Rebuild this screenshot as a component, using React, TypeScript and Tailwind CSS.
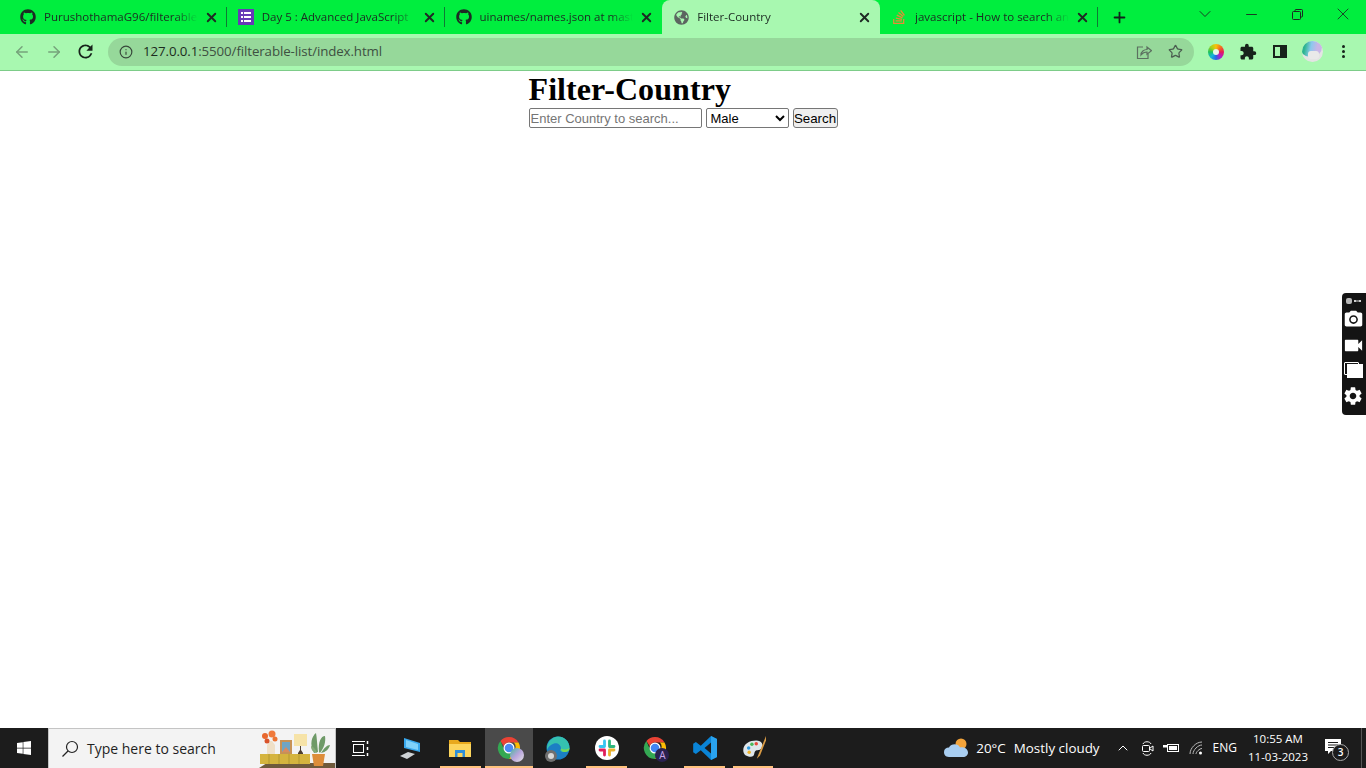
import { ArrowLeft, ArrowRight, ChevronDown, ChevronUp, Info, Minus, Plus, Star, X } from "lucide-react";
import { FaGithub, FaGlobeAmericas, FaStackOverflow, FaWindows } from "react-icons/fa";
import { MdExtension, MdPhotoCamera, MdRefresh, MdSettings, MdVideocam } from "react-icons/md";

const uiFont = "font-['Open_Sans','Noto_Sans',sans-serif]";

const tabs = [
  { id: "repo", title: "PurushothamaG96/filterable-list", icon: "github" },
  { id: "day", title: "Day 5 : Advanced JavaScript", icon: "form" },
  { id: "names", title: "uinames/names.json at master", icon: "github" },
  { id: "filter", title: "Filter-Country", icon: "globe", active: true },
  { id: "so", title: "javascript - How to search and filter", icon: "so" },
];

function TabIcon({ icon }: { icon: string }) {
  if (icon === "github") return <FaGithub size={16} className="shrink-0 text-[#1d2b24]" />;
  if (icon === "globe") return <FaGlobeAmericas size={15} className="shrink-0 text-[#5c6560]" />;
  if (icon === "so") return <FaStackOverflow size={16} className="shrink-0 text-[#e98a36]" />;
  return (
    <div className="flex h-4 w-4 shrink-0 flex-col justify-center gap-[2px] bg-[#673ab7] px-[3px]">
      {[0, 1, 2].map((row) => (
        <div key={row} className="flex h-[2px] gap-px">
          <div className="w-[2px] bg-white" />
          <div className="flex-1 bg-white" />
        </div>
      ))}
    </div>
  );
}

function TabStrip() {
  return (
    <div className={`flex h-[34px] shrink-0 items-stretch bg-[#00ee3e] pl-[9px] ${uiFont}`}>
      {tabs.map((tab, i) => {
        const noDivider = tab.active || tabs[i + 1]?.active;
        return (
          <div
            key={tab.id}
            className={`relative flex w-[217.75px] items-center pl-[11px] pr-[8px] ${tab.active ? "rounded-t-[8px] bg-[#a8f8b0]" : ""}`}
          >
            <div className="flex w-4 justify-center">
              <TabIcon icon={tab.icon} />
            </div>
            <span className="ml-2 flex-1 overflow-hidden whitespace-nowrap text-[11.5px] text-[#1c2a22] [mask-image:linear-gradient(to_right,black_85%,transparent)]">
              {tab.title}
            </span>
            <X size={15} strokeWidth={3} className="ml-[6px] shrink-0 text-[#1f2a24]" />
            {!noDivider && <div className="absolute right-0 top-[7px] h-[20px] w-px bg-[#0f7a35]" />}
          </div>
        );
      })}
      <div className="ml-[10px] flex w-[24px] items-center justify-center">
        <Plus size={17} strokeWidth={2.5} className="text-[#10231a]" />
      </div>
      <div className="ml-auto flex items-center text-[#1b2a20]">
        <div className="flex w-[46px] justify-center pb-[6px]">
          <ChevronDown size={20} strokeWidth={1.1} />
        </div>
        <div className="flex w-[46px] justify-center pb-[6px]">
          <Minus size={17} strokeWidth={1.3} />
        </div>
        <div className="flex w-[46px] justify-center pb-[6px]">
          <svg width="11" height="11" viewBox="0 0 11 11" fill="none" stroke="currentColor">
            <rect x="0.5" y="2.5" width="8" height="8" rx="1" />
            <path d="M3 2.5V1.5a1 1 0 0 1 1-1h5.500a1 1 0 0 1 1 1V7a1 1 0 0 1-1 1h-1" />
          </svg>
        </div>
        <div className="flex w-[46px] justify-center pb-[6px]">
          <X size={20} strokeWidth={1} />
        </div>
      </div>
    </div>
  );
}

function ColorWheel() {
  return (
    <div className="flex h-4 w-4 items-center justify-center rounded-full bg-[conic-gradient(#f9c20a,#f2701d,#e8185a,#b31fc4,#2866e8,#12b6d8,#1fc45a,#a6d31a,#f9c20a)]">
      <div className="h-[6px] w-[6px] rounded-full bg-[#e8f8e8]" />
    </div>
  );
}

function Toolbar() {
  return (
    <div className={`flex h-[37px] shrink-0 items-center border-b border-[#7dcc89] bg-[#a8f8b0] pb-px ${uiFont}`}>
      <div className="flex w-[108px] items-center pl-[13px]">
        <ArrowLeft size={18} strokeWidth={2} className="text-[#76a37b]" />
        <ArrowRight size={18} strokeWidth={2} className="ml-[14px] text-[#76a37b]" />
        <MdRefresh size={21} className="ml-[12px] text-[#17231b]" />
      </div>
      <div className="flex h-[28px] w-[1086px] items-center rounded-full bg-[#96d89a] pl-[11px] pr-[11px]">
        <Info size={14} strokeWidth={2} className="text-[#37473a]" />
        <span className="ml-[10px] pt-px text-[13.3px] tracking-[-0.1px] text-[#1c2b20]">
          127.0.0.1<span className="text-[#3e5042]">:5500/filterable-list/index.html</span>
        </span>
        <svg width="16" height="16" viewBox="0 0 16 16" fill="none" stroke="#5c7060" strokeWidth="1.2" className="ml-auto mr-4">
          <path d="M7 3H1.500V14.500H12V10" />
          <path d="M5 11C5 7.500 8 5.500 11 5.500V3L15.500 6.700 11 10.200V8C8.500 8 6.500 9 5 11Z" />
        </svg>
        <Star size={15} strokeWidth={2} className="text-[#4b5d50]" />
      </div>
      <div className="ml-[14px] flex items-center">
        <ColorWheel />
        <MdExtension size={18} className="ml-[15px] text-[#17231b]" />
        <div className="ml-[16px] flex h-[13px] w-[14px] justify-end border-2 border-[#17231b]">
          <div className="w-[5px] bg-[#17231b]" />
        </div>
        <div className="relative ml-[15px] h-[21px] w-[21px] overflow-hidden rounded-full bg-[#e4e4e4]">
          <div className="absolute -left-[2px] -top-[4px] h-[20px] w-[22px] rounded-full bg-[linear-gradient(100deg,#2bb58e_25%,#8cc8ee_50%,#c8b6e6_75%)]" />
          <div className="absolute bottom-[3px] left-[6px] h-[8px] w-[11px] rounded-[3px] bg-[#e9e9e9]" />
        </div>
        <div className="ml-[19px] flex flex-col gap-[2px]">
          <div className="h-[3px] w-[3px] rounded-full bg-[#17231b]" />
          <div className="h-[3px] w-[3px] rounded-full bg-[#17231b]" />
          <div className="h-[3px] w-[3px] rounded-full bg-[#17231b]" />
        </div>
      </div>
    </div>
  );
}

function CaptureWidget() {
  return (
    <div className="absolute right-0 top-[222px] flex h-[122px] w-[24px] flex-col items-center rounded-l-[4px] bg-[#141414] pr-[2px] pt-[4px] text-white">
      <div className="flex h-[8px] items-center gap-[2px]">
        <div className="h-[6px] w-[6px] rounded-[2px] bg-[#b8b8b8]" />
        <div className="h-[2px] w-[7px] border-x-2 border-[#d0d0d0] bg-[#777]" />
      </div>
      <MdPhotoCamera size={21} className="mt-[4px]" />
      <MdVideocam size={23} className="mt-[4px]" />
      <div className="relative mt-[5px] h-[16px] w-[19px]">
        <div className="absolute left-0 top-0 h-[13px] w-[15px] rounded-[1px] border border-white" />
        <div className="absolute bottom-0 right-0 h-[14px] w-[16px] bg-white" />
      </div>
      <MdSettings size={22} className="mt-[7px]" />
    </div>
  );
}

function ChromeLogo({ size = 24, dark = false }: { size?: number; dark?: boolean }) {
  return (
    <svg width={size} height={size} viewBox="0 0 24 24">
      <path d="M12 1a11 11 0 0 1 9.530 5.500H12a5.500 5.500 0 0 0-5.200 3.700L3.400 5A11 11 0 0 1 12 1Z" fill="#ea4335" />
      <path d="M21.530 6.500A11 11 0 0 1 12 23l4.700-8.200A5.500 5.500 0 0 0 16.800 6.500Z" fill="#fbbc04" />
      <path d="M12 23A11 11 0 0 1 3.400 5l4.100 9.700A5.500 5.500 0 0 0 16.700 14.800L12 23Z" fill="#34a853" />
      <circle cx="12" cy="12" r="5.500" fill="#fff" />
      <circle cx="12" cy="12" r="4.300" fill={dark ? "#4285f4" : "#4c8bf5"} />
    </svg>
  );
}

function SearchArt() {
  return (
    <svg width="76" height="38" viewBox="0 0 76 38" className="shrink-0">
      <path d="M0 38L8 33H76V38Z" fill="#6f5a3c" />
      <rect x="1" y="24" width="50" height="10" fill="#d5b43e" />
      <path d="M10 24V34M20 24V34M30 24V34M40 24V34" stroke="#a88d2b" strokeWidth="0.7" />
      <path d="M8 24V15L11 11H13L16 15V24Z" fill="#efe0c7" />
      <circle cx="6" cy="6" r="3" fill="#e8672d" />
      <circle cx="13" cy="4" r="3.500" fill="#f0793a" />
      <circle cx="8" cy="11" r="2.500" fill="#d9532a" />
      <circle cx="16" cy="9" r="2.500" fill="#ea7433" />
      <rect x="21" y="10" width="12" height="14" fill="#c79255" />
      <rect x="23" y="12" width="8" height="10" fill="#6ea5c4" />
      <path d="M23 22L27 17 31 22Z" fill="#d98a5e" />
      <rect x="35" y="4" width="13" height="12" fill="#f6e3a8" />
      <path d="M41 16V20L39 23V24H44V23L42 20V16Z" fill="#4d3e30" />
      <path d="M55 23C50 14 53 6 57 3 58 8 58 14 59 22ZM60 22C59 12 62 6 66 6 67 12 65 18 61 23ZM62 23C65 18 68 15 71 15 70 19 67 22 62 23Z" fill="#6f9a68" />
      <path d="M52 16C55 17 57 20 58 23 54 22 52 20 52 16Z" fill="#85aa78" />
      <path d="M53 24H66L64 36H55Z" fill="#dd8d3a" />
    </svg>
  );
}

const taskIcons = [
  {
    id: "pc",
    lit: false,
    icon: (
      <svg width="24" height="24" viewBox="0 0 24 24">
        <path d="M5 2L21 7V16L5 12Z" fill="#38a8ee" />
        <path d="M7 4L19 8V14L7 11Z" fill="#7fd1fa" />
        <path d="M1 20L9 16 16 18 8 23Z" fill="#cfd3d6" />
      </svg>
    ),
  },
  {
    id: "files",
    lit: true,
    icon: (
      <svg width="24" height="24" viewBox="0 0 24 24">
        <path d="M1 4H10L12 6H23V21H1Z" fill="#e8a91d" />
        <path d="M1 8H23V21H1Z" fill="#fcd55d" />
        <path d="M7 21V14H17V21H14.500V17H9.500V21Z" fill="#2f8fd8" />
      </svg>
    ),
  },
  {
    id: "chrome",
    lit: true,
    active: true,
    icon: (
      <div className="relative">
        <ChromeLogo />
        <div className="absolute -bottom-[2px] -right-[3px] h-[14px] w-[14px] rounded-full bg-[linear-gradient(135deg,#46b89a,#b8a5dc,#e5e5e5)]" />
      </div>
    ),
  },
  {
    id: "edge",
    lit: false,
    icon: (
      <div className="relative">
        <svg width="24" height="24" viewBox="0 0 24 24">
          <circle cx="12" cy="12" r="11.500" fill="#1b7fc4" />
          <path d="M1 11C2 4 8 .5 12 .5 18 .5 23.500 5 23.500 12 23.500 15 21 16 18 16 15 16 13.500 15 15 12.500 15 8.500 11 6.500 8 7.500 4 9 2 11 1 14Z" fill="#35c1b0" />
          <path d="M23.500 12C23.500 15 21 16.500 18 16 15.500 15.500 15 14 15 12.500 17 14 20 14 23.500 12Z" fill="#7bd953" />
        </svg>
        <div className="absolute -bottom-[2px] -left-[1px] flex h-[12px] w-[12px] items-center justify-center rounded-full bg-[#6f6f6f]">
          <div className="h-[6px] w-[6px] rounded-full bg-[#d8d8d8]" />
        </div>
      </div>
    ),
  },
  {
    id: "slack",
    lit: true,
    icon: (
      <svg width="24" height="24" viewBox="0 0 24 24">
        <circle cx="12" cy="12" r="12" fill="#fff" />
        <g strokeWidth="2.800" strokeLinecap="round" fill="none">
          <path d="M9.500 5V10.500M5 10.500H9" stroke="#36c5f0" />
          <path d="M14.500 5V10M14.500 10.500H19" stroke="#2eb67d" />
          <path d="M14.500 19V14M15 14H19" stroke="#ecb22e" />
          <path d="M9.500 19V14M5 14H9.500" stroke="#e01e5a" />
        </g>
      </svg>
    ),
  },
  {
    id: "chrome2",
    lit: false,
    icon: (
      <div className="relative">
        <ChromeLogo dark />
        <div className="absolute -bottom-[2px] -right-[2px] flex h-[14px] w-[14px] items-center justify-center rounded-full bg-[#2a2150] text-[10px] leading-none text-[#c9a8ec]">
          A
        </div>
      </div>
    ),
  },
  {
    id: "vscode",
    lit: true,
    icon: (
      <svg width="26" height="26" viewBox="-1 0 24 24">
        <path d="M17.500 1L23 3.600V20.400L17.500 23 8 14 3.500 17.500 1 16V8L3.500 6.500 8 10ZM17.500 7L11.500 12 17.500 17Z" fill="#0a84d6" />
        <path d="M17.500 1L23 3.600V20.400L17.500 23Z" fill="#2aa3ef" />
      </svg>
    ),
  },
  {
    id: "paint",
    lit: true,
    icon: (
      <svg width="26" height="26" viewBox="-2 0 24 24">
        <path d="M1 14C1 8 7 5 13 5 18 5 20 9 18 12 16 15 14 13 12 15 10.500 17 12 20 8 20 4 20 1 18 1 14Z" fill="#dfe6ea" />
        <circle cx="6" cy="12" r="1.600" fill="#2f9be0" />
        <circle cx="9" cy="8.500" r="1.600" fill="#4ab858" />
        <circle cx="13" cy="8" r="1.600" fill="#e8493a" />
        <circle cx="6.500" cy="16" r="1.600" fill="#f0b429" />
        <path d="M22 1L15 18 13.500 22 16.500 19 23 2.500Z" fill="#d99b45" />
      </svg>
    ),
  },
];

function Taskbar() {
  return (
    <div className={`flex h-[40px] shrink-0 items-stretch bg-[#1c1c1c] text-white ${uiFont}`}>
      <div className="flex w-[48px] items-center justify-center">
        <FaWindows size={16} />
      </div>
      <div className="flex w-[288px] items-center overflow-hidden border-x border-t border-[#c4c4c4] bg-[#f3f3f3] pl-[12px] text-[#1f1f1f]">
        <svg width="18" height="18" viewBox="0 0 18 18" fill="none" stroke="#222" strokeWidth="1.200" className="shrink-0">
          <circle cx="11" cy="7" r="5.500" />
          <path d="M7 11L1.500 16.500" />
        </svg>
        <span className="ml-[8px] flex-1 whitespace-nowrap text-[14px]">Type here to search</span>
        <SearchArt />
      </div>
      <div className="flex w-[48px] items-center justify-center">
        <svg width="17" height="15" viewBox="0 0 17 15" fill="none" stroke="#fff">
          <path d="M0 .5H13M0 14.500H13" />
          <rect x="1.500" y="3.500" width="10" height="8" />
          <path d="M15.500 0V3M15.500 6V9M15.500 12V15" strokeWidth="1.500" />
        </svg>
      </div>
      <div className="ml-[3px] flex items-stretch">
        {taskIcons.map((item) => (
          <div key={item.id} className={`relative flex w-[48.800px] items-center justify-center ${item.active ? "bg-[#4a4a4a]" : ""}`}>
            {item.icon}
            {item.lit && (
              <div className={`absolute bottom-0 h-[2px] bg-[#ffc27d] ${item.active ? "inset-x-0" : "inset-x-[4px]"}`} />
            )}
          </div>
        ))}
      </div>
      <div className="ml-auto flex items-center whitespace-nowrap text-[13.4px]">
        <svg width="26" height="22" viewBox="0 0 26 22">
          <circle cx="18" cy="7" r="5.500" fill="#f2a33a" />
          <path d="M6 20C2 20 1 17 1 15 1 12 3 10.500 6 10.500 8 6.500 15 6 17 10.500 21 9.500 25 12 25 15.500 25 18 23 20 20 20Z" fill="#a8cdf0" />
        </svg>
        <span className="ml-[7px]">20°C</span>
        <span className="ml-[8px]">Mostly cloudy</span>
        <ChevronUp size={16} strokeWidth={1.500} className="ml-[15px]" />
        <svg width="13" height="17" viewBox="0 0 13 17" fill="none" stroke="#fff" className="ml-[10px]">
          <path d="M2 4C3 1 9 1 10 4M2 13C3 16 9 16 10 13" />
          <rect x="1.500" y="5.500" width="7" height="6" rx="1" />
          <path d="M9 8L12 6V11L9 9" />
        </svg>
        <svg width="16" height="10" viewBox="0 0 16 10" className="ml-[9px]">
          <rect x="4.500" y="1.500" width="11" height="7" fill="none" stroke="#fff" />
          <rect x="6" y="3" width="8" height="4" fill="#fff" />
          <path d="M0 2H4V4.500H0Z" fill="#fff" />
        </svg>
        <svg width="14" height="14" viewBox="0 0 14 14" fill="none" stroke="#bbb" className="ml-[10px]">
          <path d="M1 13C1 7 7 1 13 1M4 13C4 9 9 4 13 4M7 13C7 11 10.500 7.500 13 7.500" />
          <circle cx="11.500" cy="12" r="1.500" fill="#fff" stroke="none" />
        </svg>
        <span className="ml-[10px] text-[12px]">ENG</span>
        <div className="ml-[6px] flex w-[70px] flex-col items-center text-[11.5px] leading-[18px]">
          <span>10:55 AM</span>
          <span>11-03-2023</span>
        </div>
        <div className="relative ml-[9px] h-[40px] w-[39px]">
          <svg width="16" height="16" viewBox="0 0 16 16" className="absolute left-[3px] top-[11px]">
            <path d="M0 0H16V12H6L3 15V12H0Z" fill="#fff" />
            <path d="M3 3.500H13M3 6H13M3 8.500H10" stroke="#1c1c1c" />
          </svg>
          <div className="absolute left-[10px] top-[16px] flex h-[17px] w-[17px] items-center justify-center rounded-full border border-[#aaa] bg-[#1c1c1c] text-[10px] font-semibold">
            3
          </div>
        </div>
        <div className="h-[40px] w-[5px] border-l border-[#555]" />
      </div>
    </div>
  );
}

export default function App() {
  return (
    <div className="flex h-screen w-full flex-col overflow-hidden bg-white">
      <TabStrip />
      <Toolbar />
      <div className="relative flex-1">
        <div className="mx-auto w-fit">
          <h1 className="font-['Liberation_Serif',serif] text-[32px] leading-[37px] font-bold tracking-[0.08px] text-black">Filter-Country</h1>
          <form className="flex items-center gap-1 font-['Liberation_Sans',sans-serif] text-[13px] text-black">
            <input
              placeholder="Enter Country to search..."
              className="h-[20px] w-[173px] rounded-[2px] border border-[#767676] px-[1px] placeholder:text-[#757575]"
            />
            <select defaultValue="Male" className="h-[20px] w-[83px] rounded-[2px] border border-[#767676] bg-white">
              <option>Male</option>
              <option>Female</option>
            </select>
            <button type="button" className="h-[20px] w-[45px] rounded-[3px] border border-[#767676] bg-[#efefef] text-[13.333px]">
              Search
            </button>
          </form>
        </div>
        <CaptureWidget />
      </div>
      <Taskbar />
    </div>
  );
}
